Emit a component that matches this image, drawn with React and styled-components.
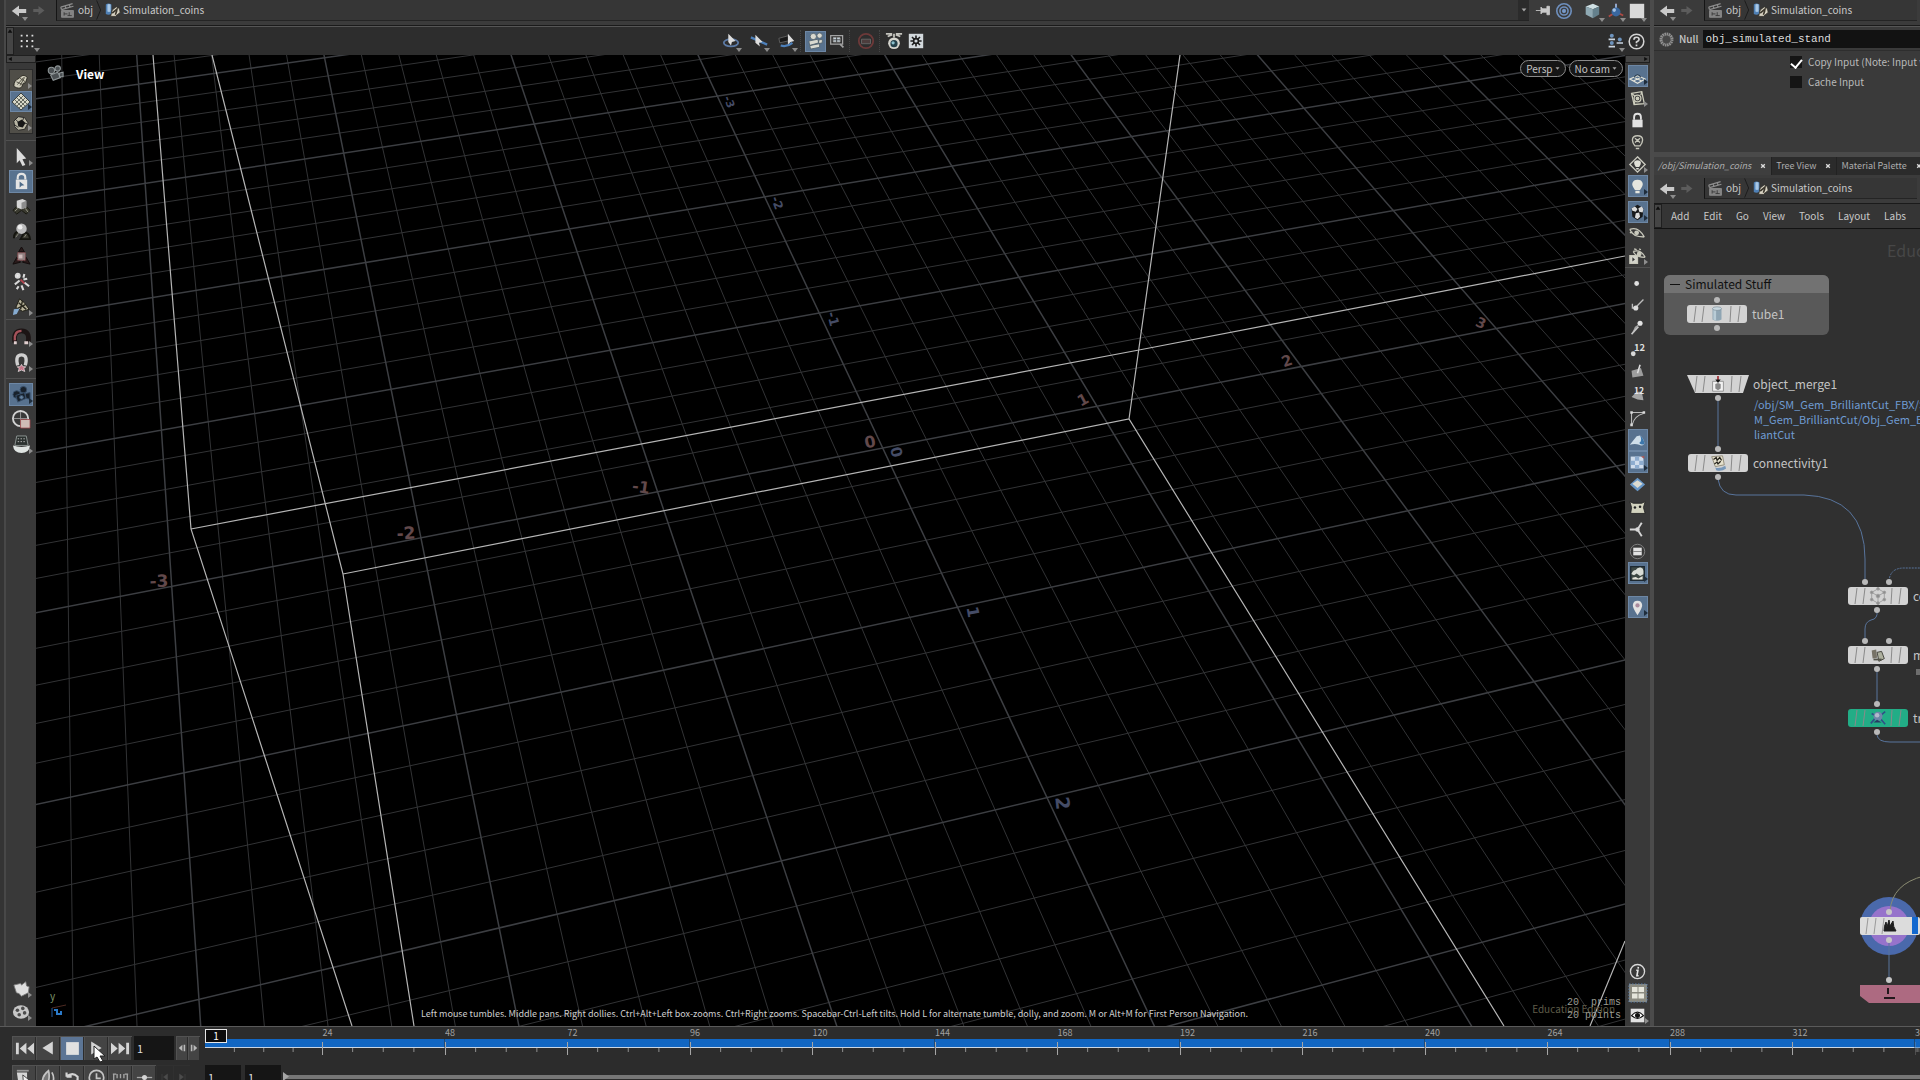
import styled, { createGlobalStyle, css } from "styled-components"

const GlobalStyle = createGlobalStyle`
    *{
        box-sizing: border-box;
        margin: 0;
        padding: 0;
    }
    body{
        background: #2c2c2c;
        color: #c8c8c8;
        font-family: "Noto Sans CJK SC", "Open Sans", sans-serif;
        font-size: 10px;
        line-height: 16px;
        overflow: hidden;
    }
    button, input{
        font: inherit;
        color: inherit;
        border: 0;
        background: none;
    }
    a{
        color: inherit;
        text-decoration: none;
    }
    svg{
        display: block;
        flex-shrink: 0;
    }
`

const Shell = styled.div`
    display: flex;
    flex-direction: column;
    height: 100vh;
    overflow: hidden;
`

const Workspace = styled.div`
    flex: 1;
    min-height: 0;
    display: grid;
    grid-template-columns: 6px minmax(0, 1644fr) 4px minmax(0, 266fr);
`

const Edge = styled.div`
    background: #343434;
    border-right: 2px solid #484848;
`

const Splitter = styled.div`
    background: #4b4b4b;
`

const Pane = styled.section`
    display: flex;
    flex-direction: column;
    min-width: 0;
    min-height: 0;
    background: #3a3a3a;
`

/* path bar */

const PathBar = styled.nav`
    display: flex;
    align-items: center;
    height: ${props => props.$tall ? 29 : 26}px;
    flex-shrink: 0;
    padding: 0 3px ${props => props.$tall ? 1 : 4}px 4px;
    background: #3b3b3b;
    border-bottom: 1px solid #1a1a1a;
`

const Crumbs = styled.div`
    flex: 1;
    display: flex;
    align-items: center;
    gap: 2px;
    height: 21px;
    margin-left: 8px;
    padding-left: 2px;
    background: #363636;
    border-left: 1px solid #151515;
    border-bottom: 1px solid #242424;
    overflow: hidden;
    white-space: nowrap;
`

const DropButton = styled.button`
    margin-left: auto;
    width: 11px;
    height: 21px;
    background: #2b2b2b;
    display: grid;
    place-items: center;
`

const PathTools = styled.div`
    display: flex;
    gap: 1px;
    padding-left: 6px;
`

const IconButton = styled.button`
    position: relative;
    display: grid;
    place-items: center;
    width: ${props => props.$w || 22}px;
    height: ${props => props.$h || 22}px;
    flex-shrink: 0;
    ${props => props.$on && css`
        background: #58728f;
        box-shadow: inset 0 0 0 1px #6d87a5;
    `}
    ${props => props.$more && css`
        &::after{
            content: "";
            position: absolute;
            right: 0;
            bottom: 2px;
            border: 3px solid transparent;
            border-left: 4px solid ${props.$on ? "#1f2d3c" : "#8d8d8d"};
            border-right: 0;
        }
    `}
    ${props => props.$drop && css`
        &::after{
            content: "";
            position: absolute;
            right: 0;
            bottom: 0;
            border: 3px solid transparent;
            border-top: 4px solid #8d8d8d;
            border-bottom: 0;
        }
    `}
`

/* viewer */

const ViewTools = styled.div`
    display: flex;
    align-items: center;
    height: 29px;
    flex-shrink: 0;
    background: #2d2d2d;
    border-top: 1px solid #555;
    padding-right: 3px;
`

const Handle = styled.div`
    width: ${props => props.$wide ? "auto" : "8px"};
    height: ${props => props.$wide ? "8px" : "100%"};
    background: #454545;
    border: 1px solid #1f1f1f;
    display: flex;
    flex-shrink: 0;
    justify-content: ${props => props.$end ? "flex-end" : "flex-start"};
`

const Centered = styled.div`
    flex: 1;
    display: flex;
    align-items: center;
    justify-content: center;
    gap: 3px;
`

const Group = styled.div`
    display: flex;
    align-items: center;
    gap: ${props => props.$gap || 0}px;
    padding: 0 ${props => props.$pad || 0}px;
    border-right: ${props => props.$line ? "1px dotted #454545" : 0};
`

const ViewBody = styled.div`
    flex: 1;
    min-height: 0;
    display: grid;
    grid-template-columns: 30px minmax(0, 1fr) 25px;
`

const Strip = styled.aside`
    background: #393939;
    display: flex;
    flex-direction: column;
    min-height: 0;
`

const StripGroup = styled.div`
    display: flex;
    flex-direction: column;
    align-items: center;
    gap: ${props => props.$gap || 0}px;
    padding-top: ${props => props.$top || 0}px;
    padding-bottom: ${props => props.$pad || 0}px;
    margin-top: ${props => props.$end ? "auto" : 0};
    border-top: ${props => props.$line ? "1px solid #505050" : 0};
`

const Framed = styled.div`
    background: #504e48;
    border: 1px solid #2a2a2a;
    display: flex;
    flex-direction: column;
`

const Viewport = styled.main`
    display: grid;
    background: #000;
    overflow: hidden;
    > *{
        grid-area: 1 / 1;
        min-width: 0;
        min-height: 0;
    }
`

const Scene = styled.svg`
    width: 100%;
    height: 100%;
`

const Overlay = styled.div`
    display: flex;
    flex-direction: column;
    justify-content: space-between;
    z-index: 1;
`

const OverlayTop = styled.div`
    display: flex;
    align-items: flex-start;
    padding: 5px 2px 0 10px;
    gap: 3px;
    > svg{
        margin-top: 5px;
    }
    h1{
        flex: 1;
        padding: 5px 0 0 9px;
        font-size: 12px;
        line-height: 18px;
        font-weight: 700;
        color: #fff;
    }
`

const Pill = styled.button`
    height: 17px;
    padding: 0 5px;
    border: 1px solid #8a8a8a;
    border-radius: 9px;
    background: #161616;
    color: #c4c4c4;
    line-height: 14px;
    display: flex;
    align-items: center;
    gap: 2px;
`

const OverlayBottom = styled.div`
    display: grid;
    grid-template-columns: 160px 1fr 160px;
    align-items: end;
    padding: 0 4px 4px 12px;
    text-align: center;
    color: #cfcfcf;
    p{
        font-size: 9px;
        white-space: nowrap;
    }
`

const Stats = styled.div`
    display: grid;
    justify-items: end;
    > *{
        grid-area: 1 / 1;
    }
    pre{
        font-family: "Liberation Mono", monospace;
        font-size: 10px;
        line-height: 13px;
        color: #9b9b92;
        text-align: right;
    }
    span{
        color: #5f5c48;
        line-height: 26px;
        padding-right: 6px;
    }
`

/* parameters */

const ParamHead = styled.div`
    display: flex;
    align-items: center;
    gap: 4px;
    height: 25px;
    padding: 1px 0 0 4px;
    border-top: 1px solid #555;
    border-bottom: 1px solid #2e2e2e;
    label{
        font-weight: 500;
    }
    input{
        flex: 1;
        min-width: 0;
        height: 18px;
        padding-left: 3px;
        background: #121212;
        color: #dcdcdc;
        font-family: "Liberation Mono", monospace;
        font-size: 11px;
    }
`

const Params = styled.div`
    height: 101px;
    flex-shrink: 0;
    padding: 1px 0 0 136px;
    overflow: hidden;
`

const Check = styled.label`
    display: flex;
    align-items: center;
    gap: 6px;
    height: 20px;
    white-space: nowrap;
    color: #b9b9b9;
    input{
        appearance: none;
        width: 12px;
        height: 12px;
        flex-shrink: 0;
        background: #151515;
        display: grid;
        place-items: center;
    }
    input:checked::after{
        content: "";
        width: 5px;
        height: 9px;
        border: solid #fff;
        border-width: 0 2px 2px 0;
        transform: rotate(40deg);
    }
`

const Tabs = styled.div`
    display: flex;
    height: 23px;
    border-top: 5px solid #4a4a4a;
    background: #222;
    overflow: hidden;
    white-space: nowrap;
    flex-shrink: 0;
`

const Tab = styled.a`
    display: flex;
    align-items: center;
    gap: 9px;
    padding: 0 5px 0 4px;
    margin-right: 1px;
    background: ${props => props.$on ? "#3e3e3e" : "#2b2b2b"};
    color: #adadad;
    font-size: 9px;
    font-style: ${props => props.$on ? "italic" : "normal"};
`

const Menu = styled.menu`
    display: flex;
    align-items: center;
    height: 25px;
    flex-shrink: 0;
    gap: 14px;
    background: #353535;
    border-bottom: 1px solid #121212;
    overflow: hidden;
    button{
        line-height: 16px;
        &:first-of-type{
            margin-left: -5px;
        }
    }
`

const Network = styled.div`
    position: relative;
    flex: 1;
    background: #303030;
    overflow: hidden;
    font-size: 12px;
    line-height: 16px;
    color: #c4c4c4;
`

const Placed = styled.div.attrs(props => ({ style: { left: props.$x, top: props.$y } }))`
    position: absolute;
    display: flex;
    align-items: center;
    gap: 4px;
    white-space: nowrap;
`

const NetBox = styled(Placed)`
    width: 165px;
    height: 60px;
    display: block;
    border-radius: 6px;
    background: #595959;
    overflow: hidden;
    h2{
        display: flex;
        align-items: center;
        gap: 5px;
        height: 18px;
        padding-left: 6px;
        background: #727272;
        color: #101010;
        font-size: 12px;
        font-weight: 400;
    }
    i{
        width: 10px;
        height: 1px;
        background: #101010;
    }
`

const Watermark = styled(Placed)`
    font-size: 16px;
    line-height: 20px;
    color: #474747;
`

const Note = styled.p`
    width: 190px;
    font-size: 11px;
    line-height: 15px;
    color: #6f9bd2;
    white-space: pre;
`

const Wires = styled.svg`
    position: absolute;
    inset: 0;
`

/* playbar */

const Playbar = styled.footer`
    height: 54px;
    flex-shrink: 0;
    display: grid;
    grid-template-columns: 191px minmax(0, 1fr);
    grid-template-rows: 38px 24px;
    padding-left: 9px;
    background: #2c2c2c;
    border-top: 1px solid #5a5a5a;
    overflow: hidden;
`

const Buttons = styled.div`
    display: flex;
    align-items: center;
    align-self: start;
    padding: ${props => props.$top || 0}px 0 0 3px;
`

const PlayButton = styled.button`
    position: relative;
    width: ${props => props.$small ? 12 : props.$flat ? 17 : 24}px;
    height: 24px;
    display: grid;
    place-items: center;
    flex-shrink: 0;
    background: ${props => props.$on ? "#5c7595" : props.$flat ? "#2c2c2c" : "#444"};
    box-shadow: inset 1px 1px 0 ${props => props.$flat ? "#303030" : "#525252"}, inset -1px 0 0 #2c2c2c;
`

const FrameInput = styled.input`
    width: ${props => props.$w || 36}px;
    height: 24px;
    padding: 0 3px;
    margin: 0 2px;
    background: #151515;
    color: #dedede;
    font-size: 11px;
`

const Cursor = styled.svg`
    position: absolute;
    left: 9px;
    top: 9px;
    z-index: 2;
`

const Ruler = styled.div`
    position: relative;
    display: grid;
    grid-template-columns: repeat(14, 24fr) 1fr;
`

const Span24 = styled.div`
    color: #a0a0a0;
    font-size: 9px;
    line-height: 12px;
    min-width: 0;
    overflow: hidden;
    margin-left: ${props => props.$first ? 5 : 0}px;
    svg{
        width: 100%;
    }
`

const Playhead = styled.output`
    position: absolute;
    left: 5px;
    top: 2px;
    width: 22px;
    height: 14px;
    background: #0c0c0c;
    border: 1px solid #e6e6e6;
    color: #fff;
    line-height: 12px;
    text-align: center;
`

const RangeRow = styled.div`
    display: flex;
    align-items: center;
    padding-left: 3px;
    input[type=range]{
        appearance: none;
        flex: 1;
        min-width: 0;
        height: 4px;
        margin-bottom: 1px;
        background: #777;
        &::-webkit-slider-thumb{
            appearance: none;
            width: 6px;
            height: 9px;
            background: #a5a5a5;
            clip-path: polygon(0 0, 100% 50%, 0 100%);
        }
    }
`

/* every drawing sits on a 20 x 20 board */
const glyphs = {
    back: <path d="M1 10l9-7v4.500h9v5h-9v4.500z" fill="#c9c9c9" />,
    forward: <path d="M18 10l-8-6v4H3v4h7v4z" fill="#5c5c5c" />,
    clap: <g fill="none" stroke="#8d8d8d"><path d="M2 6l14-4M3 9l14-4M2 6l1 3M7 4l1 3M12 3l1 3" strokeWidth="1.500" /><path d="M3 10h14v8H3z" fill="#848484" /><path d="M6 12v4M6 14h4M12 12v4M10 16h5" stroke="#333" /></g>,
    coins: <g><path d="M1 3q3-2 7 0v12q-4 2-7 0z" fill="#4f80b5" /><path d="M3 3q2-1 4 0v9q-2 1-4 0z" fill="#a9c8e6" /><path d="M7 18l2-8 5-4 4 2 1 5-6 5z" fill="#d9d4c4" stroke="#2b2925" /><path d="M9 14l7-6M13 16l2-6" stroke="#3a352c" strokeWidth="2" /></g>,
    pin: <path d="M1 10h6V6l2 2h5V5h3v10h-3v-3H9l-2 2v-4" fill="#c9c9c9" stroke="#c9c9c9" />,
    target: <g fill="none" stroke="#6e8fbd" strokeWidth="1.800"><circle cx="10" cy="10" r="8" /><circle cx="10" cy="10" r="4.500" /><circle cx="10" cy="10" r="1.500" fill="#a9c5ea" /></g>,
    cube: <g><path d="M3 5l8-3 7 3-7 3z" fill="#cfe0e4" /><path d="M3 5l8 3v10l-8-4z" fill="#8fa9b3" /><path d="M11 8l7-3v9l-7 4z" fill="#64808c" /></g>,
    tube: <g><path d="M5 4v12q5 3 10 0V4z" fill="#8fa5b3" /><path d="M6 5v11q2 1 3 1V5z" fill="#b9ccd6" /><ellipse cx="10" cy="4" rx="5" ry="2" fill="#c9d8df" stroke="#6d7f8a" strokeWidth=".6" /></g>,
    merge: <g><path d="M4 7h12v11H4z" fill="#f2f2f2" stroke="#8d8d8d" /><path d="M7 10l3-1 3 1v5l-3 2-3-2z" fill="#888" /><path d="M10 1v5" stroke="#a5383d" strokeWidth="2" /><path d="M7 5h6l-3 4z" fill="#161616" /></g>,
    connect: <g><path d="M3 3l12-1 2 10-10 2z" fill="#e5e0cc" stroke="#8d8875" /><path d="M5 6l3-2 1 3 3-3 2 3M6 11l3-2 1 2 3-3" stroke="#26241d" fill="none" strokeWidth="1.400" /><path d="M7 15q5 2 11-2l1 3q-5 4-11 2z" fill="#7797b9" /></g>,
    mesh: <g fill="#8d8d8d" stroke="#9d9d9d"><path d="M10 2l7 4v8l-7 4-7-4V6zM3 6l7 4 7-4M10 10v8" fill="none" /><circle cx="10" cy="2" r="1.500" /><circle cx="3" cy="6" r="1.500" /><circle cx="17" cy="6" r="1.500" /><circle cx="3" cy="14" r="1.500" /><circle cx="17" cy="14" r="1.500" /><circle cx="10" cy="18" r="1.500" /><circle cx="10" cy="10" r="2" /></g>,
    match: <g><path d="M3 5l5-1 1 9-5 1z" fill="#777266" /><path d="M9 7l5-1 3 8-6 3z" fill="#aeb09e" stroke="#3c3b33" /><path d="M5 15h9" stroke="#55534a" strokeWidth="2" /></g>,
    axis: <g><path d="M10 2v9M10 11l8 4M10 11l-8 5" stroke="#ad4a44" strokeWidth="2" /><path d="M10 11v-9" stroke="#8fb3dd" strokeWidth="2" /><circle cx="10" cy="11" r="5" fill="#39679f" /><circle cx="8" cy="9" r="2" fill="#a5c2e3" /></g>,
    xform: <g><path d="M2 16l6-7M18 17l-6-7M3 5l5 3M18 3l-5 4" stroke="#2f4f87" strokeWidth="1.800" /><circle cx="10" cy="8" r="5" fill="#6e86a8" /><circle cx="9" cy="7" r="2.500" fill="#b3b9cc" /><path d="M5 15l4-3 5 3z" fill="#273a63" /></g>,
    square: <path d="M2 2h16v16H2z" fill="#dadada" />,
    dots: <path d="M3 3h2v2H3zM9 3h2v2H9zM15 3h2v2h-2zM3 9h2v2H3zM9 9h2v2H9zM15 9h2v2h-2zM3 15h2v2H3zM9 15h2v2H9zM15 15h2v2h-2z" fill="#dedede" />,
    tumble: <g><ellipse cx="10" cy="12" rx="8" ry="4" fill="none" stroke="#5d7ba6" strokeWidth="2" /><path d="M7 2l8 8-4 1-1 4-3-4z" fill="#ddd" /></g>,
    pan: <g><path d="M1 6l18 8" stroke="#4d80bb" strokeWidth="2.500" /><path d="M6 3l8 8-4 1 1 4-5-4z" fill="#ddd" /></g>,
    dolly: <g><path d="M1 7l11-3 3 5-13 3z" fill="#171717" stroke="#8a8a8a" strokeWidth=".6" /><path d="M3 15q7 2 13-3" fill="none" stroke="#4d80bb" strokeWidth="2.500" /><path d="M11 2l7 8-4 1-3 3z" fill="#ddd" /></g>,
    movie: <g fill="#d9d9d0" stroke="#55646f"><circle cx="7" cy="5" r="3.500" /><circle cx="14" cy="4" r="3" /><path d="M2 10l10-2 1 4-10 3zM13 9l4-1v4l-4 1zM3 15l11-2v4L4 19z" /></g>,
    camera: <g fill="#4b5053" stroke="#8f9698" strokeWidth="1.200"><circle cx="6" cy="6" r="3.500" /><circle cx="13" cy="4" r="3" /><path d="M5 11l8-3 3 6-8 3zM15 9l4-1v5h-4z" /></g>,
    camblue: <g fill="#18212b" stroke="#39506a"><circle cx="5" cy="10" r="4" /><circle cx="12" cy="5" r="3.500" /><path d="M4 11l9-3 2 6-9 4zM14 9l5-1v7l-5-1z" /><circle cx="10" cy="13" r="2" fill="#65829e" /></g>,
    snap: <g fill="none" stroke="#a3a3a3"><path d="M2 3h14v10H2z" strokeWidth="1.500" /><path d="M5 5.500h8v5H5z" fill="#c9d7e0" /><path d="M9 5v6M5 8h8" stroke="#333" /><path d="M13 13l4 4" strokeWidth="2" /></g>,
    stop: <g fill="none" stroke="#6d3939"><circle cx="10" cy="10" r="8" strokeWidth="2" /><path d="M5 8h10v5H5z" stroke="#666" fill="#4c3d3d" /></g>,
    orbcam: <g><path d="M1 2h7M12 2h7M3 5l5-2M17 5l-5-2M10 2v4" stroke="#c3c3bd" strokeWidth="2" /><circle cx="10" cy="12.500" r="6.500" fill="#d4d4cd" /><circle cx="10" cy="13" r="4" fill="#24414b" /><circle cx="9" cy="12" r="1.800" fill="#8ac0cc" /></g>,
    gear: <g><path d="M1 1h18v18H1z" fill="#d2d8dc" /><g stroke="#1d1d1d" strokeWidth="2"><path d="M10 3v14M3 10h14M5 5l10 10M15 5L5 15" /></g><circle cx="10" cy="10" r="3" fill="#d2d8dc" stroke="#1d1d1d" strokeWidth="2" /></g>,
    people: <g fill="#6d93bd"><circle cx="6" cy="3.500" r="2.500" /><circle cx="6" cy="12.500" r="2.500" /><circle cx="16" cy="8" r="2.500" /><path d="M2 7h8v2H2zM2 16h8v2H2zM12 11.500h8v2h-8z" fill="#c9d4df" /></g>,
    help: <g fill="none" stroke="#d4d4d4" strokeWidth="1.800"><circle cx="10" cy="10" r="8.600" /><path d="M7 8q0-3 3-3t3 2.500q0 1.500-3 3v1.500M10 13.500v2" strokeWidth="2" /></g>,
    patch: <g><path d="M2 16q0-7 6-9 4-6 9-1l-2 6q-3-1-4 4-2 4-9 0z" fill="#cfccbb" stroke="#26241d" /><path d="M6 14l7-8M9 15l5-9M5 11l7 3M9 7l6 4" stroke="#4a473c" /></g>,
    diamond: <g><path d="M10 1l9 9-9 8-9-8z" fill="#d8d8c8" stroke="#3a3f3d" /><path d="M6 6l8 8M4 8l8 8M8 4l8 8M14 6l-8 8M12 4l-8 8M16 8l-8 8" stroke="#65695f" /></g>,
    blob: <g><path d="M2 8l5-5 7 1 4 6-4 7-7 1-4-4z" fill="#b9b6a4" stroke="#222" /><path d="M6 9l5-3 4 4-3 5-5-1z" fill="#171717" /><path d="M3 12l4 3M4 6l3 3M13 4l-1 3M17 11l-3-1" stroke="#222" /></g>,
    arrow: <path d="M5 1l10 11-4 1 3 6-3 1-3-6-3 3z" fill="#dcdcdc" />,
    lock: <g><path d="M4 9h12v9H4z" fill="#e2e2e2" /><path d="M6 9V6q0-4 4-4t4 4v3" fill="none" stroke="#e2e2e2" strokeWidth="2.200" /></g>,
    lockarrow: <g><path d="M4 8h12v10H4z" fill="#e4e4e4" /><path d="M6 8V6q0-4 4-4t4 4v2" fill="none" stroke="#e4e4e4" strokeWidth="2.200" /><path d="M8 10l5 4-3 .5-2 2z" fill="#4d6a88" /></g>,
    move: <g><path d="M1 14l5-5h8l5 5-4 4-5-4-5 4z" fill="#39392f" stroke="#17170f" /><path d="M5 4l6-2 4 2v7l-5 2-5-2z" fill="#d5d5d5" /><path d="M10 6v7l5-2V4z" fill="#8d8d8d" /><path d="M3 15l3-3M14 12l3 4" stroke="#9b9b8a" /></g>,
    rotate: <g><path d="M2 17q0-7 6-7M9 18l4-7q5 0 6 7z" fill="#3b3b31" stroke="#15150f" strokeWidth="2" /><path d="M4 16l3-4M13 16l2-3" stroke="#8d8d80" /><circle cx="10" cy="7" r="5.500" fill="#bcbcbc" /><circle cx="8.500" cy="5.500" r="2.500" fill="#eee" /></g>,
    scale: <g><path d="M10 0l3 5H7zM1 18l4-7 4 5zM19 18l-4-7-4 5z" fill="#2a1b1b" stroke="#120c0c" /><path d="M6 6h8v8H6z" fill="#8f8080" stroke="#a04b50" strokeDasharray="1 1" /><path d="M7 8h4v4H7z" fill="#ccb8b8" /></g>,
    puppet: <g fill="none" stroke="#d9d9d9" strokeWidth="2.200"><circle cx="6" cy="4" r="2" fill="#eee" /><path d="M12 6l1-4M8 9l-5 4M13 11l5 4M10 14l2 5M7 15l-2 3M12 8l4-1" /><path d="M9 8l4 4" stroke="#b1444f" strokeWidth="2" /></g>,
    handles: <g><path d="M8 2l5 4 5 7-7 2-7-4z" fill="#b9b49c" stroke="#1f1d14" /><path d="M7 6l8 7M11 4l-2 9M14 8l-8 4" stroke="#2a281d" strokeWidth="1.500" /><path d="M2 13l6-1-3 6-4 1z" fill="#86abd0" /></g>,
    magred: <g fill="none"><path d="M3 15q-2-12 7-12t7 12" stroke="#1c1414" strokeWidth="5" /><path d="M3 13q-1-10 7-10" stroke="#a4525a" strokeWidth="2.500" /><path d="M2 14h3v3H2zM13 14h4v3h-4z" fill="#e1cfcf" /></g>,
    magnet: <g fill="none"><path d="M6 13q-3-11 4-11t4 11" stroke="#cfcfcf" strokeWidth="3.500" /><path d="M10 12l1.500 2.500h3l-2 2 1 3-3.500-1.500-3.500 1.500 1-3-2-2h3z" fill="#c67689" stroke="#eee" strokeWidth=".7" /></g>,
    render: <g><circle cx="9" cy="9" r="8" fill="none" stroke="#d3d3d3" strokeWidth="2" /><path d="M9 2v14M2 9h14" stroke="#9a9a9a" /><path d="M9 10h10v9H9z" fill="#d0bcb6" stroke="#973f44" strokeWidth=".8" /></g>,
    flip: <g><path d="M5 1h10l2 10H3z" fill="#2b312f" stroke="#8d9693" /><path d="M6 4h8M6 7h8" stroke="#bcbcbc" strokeDasharray="1.500" /><path d="M1 11q9 3 18 0-1 8-9 8t-9-8z" fill="#dfe4e2" /></g>,
    note: <path d="M1 6l8-2 1 2 5-4 1 5 3 1-1 7-8 4-3-3-3-1z" fill="#dedede" stroke="#777" />,
    reel: <g><ellipse cx="10" cy="10" rx="9" ry="7.500" fill="#c7c7c7" /><g fill="#4c4c4c"><circle cx="6" cy="8" r="2" /><circle cx="12" cy="6" r="2" /><circle cx="14" cy="11" r="2" /><circle cx="8" cy="13" r="2" /></g></g>,
    plane: <g fill="none" stroke="#e4e4da" strokeWidth="1.300"><path d="M1 13l9-4 9 4-9 5zM5.500 11l9 4M14.500 11l-9 4" /><path d="M6 11q4-6 8 0" stroke="#26394c" /></g>,
    ghost: <g fill="none" stroke="#cdcdbc" strokeWidth="1.500"><path d="M3 4l12-2 3 14-12 1z" /><circle cx="10" cy="10" r="4" /><circle cx="10" cy="10" r="1.500" fill="#cdcdbc" /><path d="M3 4l4 3M15 2l-1 4M6 17l1-4" /></g>,
    nolight: <g fill="none" stroke="#c4c4b8" strokeWidth="1.600"><path d="M7 14q-3-4-3-7 0-5 6-5t6 5q0 3-3 7zM8 17h4M7 5l6 5M13 5l-6 5" /></g>,
    headlight: <g><path d="M10 1l9 9-9 9-9-9z" fill="none" stroke="#cbcbc0" strokeWidth="1.600" /><path d="M8 13q-2-3-2-5 0-3 4-3t4 3q0 2-2 5zM8.500 14h3v2h-3z" fill="#e1e1d8" /></g>,
    bulb: <path d="M7 14Q3 9 4 6q1-4 6-4t6 4q1 3-3 8zM7.500 15h5v3h-5z" fill="#e6e6de" />,
    checker: <g><path d="M3 5l7-4 7 4-1 10-6 4-6-4z" fill="#17191b" /><path d="M3 5l4-2 3 3-2 3-4-1zM11 5l4-2 2 3-1 4-4-1zM8 11l4-1 1 5-3 3-3-2z" fill="#dadada" /></g>,
    eye1: <g fill="none" stroke="#cacabd" strokeWidth="1.600"><path d="M1 4q10-4 17 9M1 4q3 9 17 9M1 8l3-1" /><circle cx="9" cy="8" r="2" fill="#cacabd" /></g>,
    eye2: <g fill="none" stroke="#c8c8bb" strokeWidth="1.500"><path d="M5 4q9-3 14 7M5 4q3 7 14 7M6 1l3 1M12 1l2 1" /><circle cx="12" cy="7" r="2" fill="#c8c8bb" /><path d="M1 9h9v9H1z" fill="#d4d4cb" /><path d="M4 11l3 2.500-3 2.500z" fill="#333" stroke="none" /></g>,
    point: <circle cx="9" cy="10" r="2.800" fill="#e2e2e2" />,
    pnormal: <g><path d="M8 12l9-9M4 8v5h4" stroke="#bcbcbc" strokeWidth="1.600" fill="none" /><circle cx="8" cy="13" r="3" fill="#dcdcdc" /></g>,
    ptrail: <g><path d="M3 18l4-9 5-3z" fill="#a5a5a5" /><circle cx="13" cy="5" r="3" fill="#e2e2e2" /><path d="M3 18l8-9" stroke="#c5c5c5" strokeWidth="2" /></g>,
    pnum: <g><circle cx="5" cy="15" r="2.800" fill="#d9d9d9" /><text x="6" y="12" fontSize="11" fontWeight="700" fill="#dedede">12</text></g>,
    prim: <g><path d="M3 9l11-3 3 9-13 2z" fill="#9d9d9d" /><path d="M10 12l3-10" stroke="#dedede" strokeWidth="1.800" /></g>,
    primnum: <g><path d="M3 14l6-6h6l2 10-7-1z" fill="#a5a5a5" /><text x="6" y="11" fontSize="10" fontWeight="700" fill="#e6e6e6">12</text></g>,
    hull: <g fill="none" stroke="#bcbcbc" strokeWidth="1.200"><path d="M3 18V3h15" /><path d="M4 17Q6 7 17 4" /><path d="M1.500 1.500h3v3h-3zM1.500 16h3v3h-3zM16 1.500h3v3h-3z" fill="#dadada" stroke="none" /></g>,
    shade: <g><path d="M1 15l8-10 4-1q5 4 5 10-3 3-6 1-5-2-11 0z" fill="#cfdee9" /><path d="M12 13q4-3 1-9 5 4 5 10-3 2-6-1z" fill="#3d77ab" /></g>,
    uv: <g><path d="M2 3h15v14H2z" fill="#cfdcec" /><path d="M2 8h5v5H2zM7 3h5v5H7zM12 8h5v5h-5zM7 13h5v4H7z" fill="#8daccf" /><path d="M14 3l4-1v4" fill="#a35a58" /></g>,
    gem: <g><path d="M10 2l9 8-9 8-9-8z" fill="#6897c7" /><path d="M10 5l6 4-6 5-6-5z" fill="#dcdcd2" /></g>,
    cow: <g><path d="M1 3l4 2h10l4-2-2 7 2 7H2l1-7z" fill="#d3d3bf" stroke="#222" /><circle cx="7" cy="10" r="1.500" fill="#222" /><circle cx="13" cy="9" r="1.500" fill="#222" /></g>,
    tripod: <g stroke="#d6d6d6" strokeWidth="2.200"><path d="M1 10h9M10 10l5-8M10 10l5 8" /><circle cx="10" cy="10" r="1.500" fill="#eee" /></g>,
    list: <g><circle cx="10" cy="10" r="8.500" fill="none" stroke="#8a8a8a" /><path d="M5 5.500h10v9H5z" fill="#e2e2e2" /><path d="M5 10h10" stroke="#777" /></g>,
    image: <g><path d="M2 2h16v16H2z" fill="#3d4743" stroke="#1d2830" strokeWidth="1.500" /><path d="M3 10q2-4 5-4 2-4 6-3 3 1 3 4v4l-4 2-4-3-3 2-3-1z" fill="#d8dcd6" /><path d="M4 15l4-1 3 2 5-3v4H4z" fill="#e3e3da" /></g>,
    marker: <g><path d="M10 19Q4 10 4.500 7q.5-5 5.500-5t5.500 5q.5 3-5.500 12z" fill="#e1e1e1" /><circle cx="10" cy="7.500" r="2.500" fill="#a98a9c" /></g>,
    info: <g><circle cx="10" cy="10" r="8.300" fill="none" stroke="#d8d8d8" strokeWidth="1.600" /><path d="M11 4.500l-.3 2M8.500 8.500h2l-1.200 6.500h2" fill="none" stroke="#e6e6e6" strokeWidth="1.900" /></g>,
    layout4: <g><path d="M1 1h18v18H1z" fill="#8a8a80" stroke="#5c7ea8" strokeDasharray="1.500" /><path d="M4 4h5.500v5H4zM10.500 4H16v5h-5.500zM4 10.500h5.500v5H4zM10.500 10.500H16v5h-5.500z" fill="#e6e6dc" /></g>,
    eyebox: <g><path d="M2 2h16v16H2z" fill="#e2e2e2" /><path d="M3 10q7-8 14 0-7 7-14 0z" fill="#fff" stroke="#111" strokeWidth="1.300" /><circle cx="10" cy="10" r="3" fill="#111" /></g>,
    ring: <g><circle cx="10" cy="10" r="6.500" fill="#474747" stroke="#909090" strokeWidth="3.500" strokeDasharray="1.800 .7" /></g>,
    first: <path d="M1 4h3v12H1zM12 4v12l-7-6zM20 4v12l-7-6z" fill="#d5d5d5" />,
    reverse: <path d="M16 2v16L3 10z" fill="#d5d5d5" />,
    halt: <path d="M2.500 2.500h15v15h-15z" fill="#e1e1e1" />,
    play: <path d="M4 2v16l13-8z" fill="#d5d5d5" />,
    last: <path d="M16 4h3v12h-3zM0 4v12l7-6zM8 4v12l7-6z" fill="#d5d5d5" />,
    stepback: <path d="M11 2v16L2 10zM14 2h4v16h-4z" fill="#b9b9b9" />,
    stepfwd: <path d="M2 2h4v16H2zM9 2v16l9-8z" fill="#b9b9b9" />,
    page: <g><path d="M1 4h12v14H3z" fill="#d7d7d7" /><path d="M1 2h14" stroke="#999" strokeWidth="2" /><path d="M8 7l10 8-5 1-4 4z" fill="#f1f1f1" stroke="#333" /></g>,
    sound: <g fill="none" stroke="#c4c4c4" strokeWidth="2"><path d="M3 17Q2 8 10 2q2 7-1 16" fill="#777" /><path d="M14 4q4 7 0 14" /></g>,
    loop: <path d="M3 9h6M3 9V4M3 9q7-6 13 0v4q-6 5-12 1" fill="none" stroke="#d4d4d4" strokeWidth="2.500" />,
    clock: <g fill="none" stroke="#c4c4c4" strokeWidth="2"><circle cx="10" cy="10" r="8.500" /><path d="M10 5v6h5" /></g>,
    comb: <path d="M2 6v10M6 6v5M10 6v5M14 6v5M18 6v10M1 6h4M15 6h4" stroke="#a5a5a5" strokeWidth="1.600" fill="none" />,
    key: <g><path d="M1 10h18" stroke="#a5a5a5" strokeWidth="1.500" /><circle cx="10" cy="10" r="3" fill="#d4d4d4" /></g>,
    keyprev: <path d="M4 4v12M15 4v12l-8-6z" fill="#4b4b4b" stroke="#4b4b4b" />,
    keynext: <path d="M16 4v12M5 4v12l8-6z" fill="#4b4b4b" stroke="#4b4b4b" />,
    down: <path d="M2 5h16l-8 10z" fill="#a5a5a5" />,
    up: <path d="M2 16h16L10 4z" fill="#0d0d0d" />,
    left: <path d="M16 3v14L4 10z" fill="#0d0d0d" />,
    right: <path d="M4 3v14l12-7z" fill="#0d0d0d" />,
    close: <path d="M4 4l12 12M16 4L4 16" stroke="#dcdcdc" strokeWidth="4.500" />,
    chevron: <path d="M4-14l10 24L4 34" fill="none" stroke="#1c1c1c" strokeWidth="2.500" />,
}

const Icon = ({ name, size = 16 }) => (
    <svg viewBox="0 0 20 20" width={size} height={size} overflow="visible" aria-hidden="true">{glyphs[name]}</svg>
)

const Tool = ({ name, size, ...rest }) => (
    <IconButton aria-label={name} {...rest}><Icon name={name} size={size} /></IconButton>
)

function Path({ children, tall }) {
    return (
        <PathBar $tall={tall}>
            <Tool name="back" size={16} $w={18} $h={20} $drop />
            <Tool name="forward" size={15} $w={20} $h={20} />
            <Crumbs>
                <Icon name="clap" size={17} />
                <a href="#obj">obj</a>
                <Icon name="chevron" size={8} />
                <Icon name="coins" size={16} />
                <a href="#coins">Simulation_coins</a>
                {children && <DropButton aria-label="history"><Icon name="down" size={6} /></DropButton>}
            </Crumbs>
            {children && <PathTools>{children}</PathTools>}
        </PathBar>
    )
}

/* ground plane projection: world x, z -> screen */
function project(x, z) {
    const w = 1 + 0.0245 * x - 0.082 * z
    return [
        (241.2 * x - 3.7 * z + 882.7) / w,
        (-31.75 * x + 109.4 * z + 448) / w,
    ]
}

function gridPath(major) {
    const parts = []
    for (let i = -30; i <= 30; i++) {
        if ((i % 5 === 0) !== major) continue
        const k = i / 5
        const [ax, ay] = project(k, -6)
        const [bx, by] = project(k, 5)
        const [cx, cy] = project(-6, k)
        const [dx, dy] = project(6, k)
        parts.push(`M${ax} ${ay}L${bx} ${by}`)
        if (k <= 5) parts.push(`M${cx} ${cy}L${dx} ${dy}`)
    }
    return parts.join("")
}

const xLabels = [
    ["-3", 159, 581, -2, 17], ["-2", 406, 533, -4, 17], ["-1", 641, 487, 8, 16], ["0", 870, 442, -12, 16],
    ["1", 1083, 400, -28, 15], ["2", 1287, 361, -20, 15], ["3", 1481, 323, 24, 14],
]

const zLabels = [
    ["-3", 729, 102, 70, 11], ["-2", 777, 203, 70, 12], ["-1", 833, 319, 76, 13],
    ["0", 896, 452, 76, 15], ["1", 973, 612, 80, 16], ["2", 1063, 803, 84, 19],
]

function GroundLabels({ items, color }) {
    return (
        <g fill={color} fontFamily="DejaVu Sans, sans-serif" fontWeight="700" textAnchor="middle" dominantBaseline="central">
            {items.map(([text, x, y, turn, size]) => (
                <text key={text} fontSize={size} transform={`translate(${x} ${y}) rotate(${turn})`}>{text}</text>
            ))}
        </g>
    )
}

function Viewer() {
    return (
        <Viewport>
            <Scene viewBox="36 55 1589 971" preserveAspectRatio="xMidYMid slice">
                <path d={gridPath(false)} stroke="#323335" fill="none" />
                <path d={gridPath(true)} stroke="#3c3e42" strokeWidth="1.500" fill="none" />
                <path
                    d="M153 55L191 529L352 1026M212 55L343 574L414 1026M191 529L1139 350L1625 256M343 574L1129 419L1504 1026M1129 419L1180 55M1590 1026L1625 941"
                    stroke="#b5b5b5"
                    strokeWidth="1.200"
                    fill="none"
                />
                <GroundLabels items={xLabels} color="#62494b" />
                <GroundLabels items={zLabels} color="#454c66" />
            </Scene>
            <Overlay>
                <OverlayTop>
                    <Icon name="camera" size={18} />
                    <h1>View</h1>
                    <Pill>Persp <Icon name="down" size={5} /></Pill>
                    <Pill>No cam <Icon name="down" size={5} /></Pill>
                </OverlayTop>
                <OverlayBottom>
                    <svg width="30" height="34" viewBox="0 0 30 34">
                        <text x="2" y="12" fontSize="10" fill="#7d9468">y</text>
                        <path d="M4 20l14-3" stroke="#4d2a22" />
                        <path d="M4 20v9" stroke="#225a9d" />
                        <path d="M6 22h3v4h4v-3" fill="none" stroke="#2b7ac9" strokeWidth="2" />
                    </svg>
                    <p>Left mouse tumbles. Middle pans. Right dollies. Ctrl+Alt+Left box-zooms. Ctrl+Right zooms. Spacebar-Ctrl-Left tilts. Hold L for alternate tumble, dolly, and zoom. M or Alt+M for First Person Navigation.</p>
                    <Stats>
                        <span>Education Edition</span>
                        <pre>{"20  prims\n20 points"}</pre>
                    </Stats>
                </OverlayBottom>
            </Overlay>
        </Viewport>
    )
}

const nodes = [
    { name: "tube1", x: 33, y: 76, icon: "tube", ins: [30], outs: [30] },
    { name: "object_merge1", x: 34, y: 146, icon: "merge", ins: [], outs: [30], shape: "funnel" },
    { name: "connectivity1", x: 34, y: 225, icon: "connect", ins: [30], outs: [30] },
    { name: "copytopoints1", x: 194, y: 358, icon: "mesh", ins: [17, 41], outs: [29] },
    { name: "merge1", x: 194, y: 417, icon: "match", ins: [17, 41], outs: [29] },
    { name: "transform1", x: 194, y: 480, icon: "xform", ins: [29], outs: [29], fill: "#22ad86" },
]

function NetNode({ name, x, y, icon, ins, outs, shape, fill = "#d3d3d3" }) {
    return (
        <Placed $x={x - 1} $y={y - 9}>
            <svg width="62" height="36" viewBox="-1 -9 62 36">
                {shape === "funnel"
                    ? <path d="M-1 0h62l-6 18H7z" fill={fill} />
                    : <rect width="60" height="18" rx="3" fill={fill} />}
                <path d="M9 1l-2 16M17 1l-2 16M44 1l-1 16M53 1l-2 16" stroke="#8a8a8a" />
                <svg x="21" y="0" width="18" height="18" viewBox="0 0 20 20">{glyphs[icon]}</svg>
                {ins.map(p => <circle key={p} cx={p} cy="-5" r="3" fill="#b9b9b9" />)}
                {outs.map(p => <circle key={p} cx={p} cy="23" r="3" fill="#b9b9b9" />)}
            </svg>
            {name}
        </Placed>
    )
}

function NetworkView() {
    return (
        <Network>
            <Watermark $x={233} $y={11}>Education Edition</Watermark>
            <NetBox $x={10} $y={46}><h2><i />Simulated Stuff</h2></NetBox>
            <Wires width="100%" height="100%" fill="none" stroke="#58749c">
                <path d="M64 170V220M64 250Q66 266 82 266H150Q211 268 211 330V352" />
                <path d="M223 382Q224 390 217 391Q211 393 211 400V410M223 442V474M223 506Q224 513 236 513H270" />
                <path d="M235 352Q236 339 250 339H270" strokeDasharray="2 1" />
                <circle cx="235" cy="697" r="29" fill="#4a69ab" stroke="none" />
                <circle cx="235" cy="697" r="20" fill="#9673cb" stroke="none" />
                <path d="M236 682Q238 655 270 647" stroke="#8b8c72" />
                <path d="M235 714V750" />
                <rect x="206" y="688" width="60" height="18" rx="2" fill="#dcdcdc" stroke="none" />
                <path d="M214 689l-2 16M222 689l-2 16M230 689l-2 16" stroke="#9a9a9a" />
                <path d="M258 688h6v17h-6z" fill="#1268cf" stroke="none" />
                <path d="M230 702q0-5 2-9l1 5 2-7 1 6 3-5q0 6 3 10z" fill="#1d1d1d" stroke="#1d1d1d" />
                <g fill="#c6c6c6" stroke="none">
                    <circle cx="235" cy="683" r="3" />
                    <circle cx="235" cy="711" r="3" />
                    <circle cx="235" cy="751" r="3" />
                </g>
                <path d="M206 756h60v18h-51l-9-7z" fill="#ad6a81" stroke="none" />
                <path d="M234 759v6M230 769h11" stroke="#22181c" strokeWidth="2" />
                <path d="M262 440h8v6h-8z" fill="#6d6d6d" stroke="none" />
            </Wires>
            {nodes.map(node => <NetNode key={node.name} {...node} />)}
            <Placed $x={100} $y={168}>
                <Note>{"/obj/SM_Gem_BrilliantCut_FBX/S\nM_Gem_BrilliantCut/Obj_Gem_Bril\nliantCut"}</Note>
            </Placed>
        </Network>
    )
}

const frames = Array.from({ length: 15 }, (_, i) => i * 24)

function Timeline() {
    return (
        <Ruler>
            {frames.map(frame => (
                <Span24 key={frame} $first={frame === 0}>
                    {frame || "\u00a0"}
                    <svg height="16" viewBox="0 0 120 16" preserveAspectRatio="none">
                        <path d="M0 0h120v9H0z" fill="#1166c2" />
                        <path d="M0 8.500h120" stroke="#c9d6e4" />
                        <path d="M30 9v4M60 9v4M90 9v4" stroke="#8d8d8d" />
                        {frame > 0 && <path d="M.5 3v13" stroke="#a5a5a5" />}
                    </svg>
                </Span24>
            ))}
            <Playhead>1</Playhead>
        </Ruler>
    )
}

/* name, has a flyout, is active */
const leftTools = [
    [4, [["arrow", 1], ["lockarrow", 0, 1], ["move"], ["rotate"], ["scale"], ["puppet"], ["handles", 1]]],
    [6, [["magred", 1], ["magnet", 1]]],
    [4, [["camblue", 1, 1], ["render"], ["flip", 1]]],
]

const rightTools = [
    [2, [["plane", 1, 1], ["ghost", 1], ["lock"], ["nolight"], ["headlight", 1], ["bulb", 1, 1]]],
    [4, [["checker", 1, 1], ["eye1"], ["eye2", 1]]],
    [4, [["point"], ["pnormal"], ["ptrail"], ["pnum"], ["prim"], ["primnum"]]],
    [3, [["hull"], ["shade", 0, 1], ["uv", 1, 1], ["gem"]]],
    [1, [["cow"], ["tripod"], ["list"], ["image", 1, 1]]],
    [12, [["marker", 1, 1]]],
]

export default function App() {
    return (
        <Shell>
            <GlobalStyle />
            <Workspace>
                <Edge />
                <Pane>
                    <Path>
                        <Tool name="pin" size={17} $w={14} />
                        <Tool name="target" size={18} $w={28} />
                        <Tool name="cube" size={18} $w={26} $drop />
                        <Tool name="axis" size={18} $w={20} $drop />
                        <Tool name="square" size={18} $w={20} $drop />
                    </Path>
                    <ViewTools>
                        <Handle><Icon name="up" size={6} /></Handle>
                        <Tool name="dots" size={18} $w={26} $drop />
                        <Centered>
                            <Group $gap={6} $pad={2} $line>
                                <Tool name="tumble" size={18} $drop />
                                <Tool name="pan" size={18} $drop />
                                <Tool name="dolly" size={18} $drop />
                            </Group>
                            <Group $line $pad={1}>
                                <Tool name="movie" size={18} $w={21} $h={21} $on />
                                <Tool name="snap" size={17} />
                            </Group>
                            <Group $line $pad={2}>
                                <Tool name="stop" size={18} />
                            </Group>
                            <Group>
                                <Tool name="orbcam" size={18} />
                                <Tool name="gear" size={16} />
                            </Group>
                        </Centered>
                        <Tool name="people" size={16} $drop $w={20} />
                        <Tool name="help" size={17} />
                    </ViewTools>
                    <ViewBody>
                        <Strip>
                            <Handle $wide><Icon name="left" size={6} /></Handle>
                            <StripGroup $top={6} $pad={6}>
                                <Framed>
                                    <Tool name="patch" size={18} $w={22} $h={21} $more />
                                    <Tool name="diamond" size={20} $w={22} $h={21} $on $more />
                                    <Tool name="blob" size={18} $w={22} $h={21} $more />
                                </Framed>
                            </StripGroup>
                            {leftTools.map(([top, group], i) => (
                                <StripGroup key={i} $line $top={top} $pad={i === 1 ? 4 : 1} $gap={2}>
                                    {group.map(([name, more, on]) => (
                                        <Tool key={name} name={name} size={19} $w={24} $h={23} $more={more} $on={on} />
                                    ))}
                                </StripGroup>
                            ))}
                            <StripGroup $end $pad={3}>
                                <Tool name="note" size={17} $h={23} $more />
                                <Tool name="reel" size={18} $h={23} $more />
                            </StripGroup>
                        </Strip>
                        <Viewer />
                        <Strip>
                            <Handle $wide $end><Icon name="right" size={6} /></Handle>
                            {rightTools.map(([top, group], i) => (
                                <StripGroup key={i} $top={top} $line={i === 2}>
                                    {group.map(([name, more, on]) => (
                                        <Tool key={name} name={name} size={17} $w={20} $more={more} $on={on} />
                                    ))}
                                </StripGroup>
                            ))}
                            <StripGroup $end>
                                <Tool name="info" size={17} />
                                <Tool name="layout4" size={20} />
                                <Tool name="eyebox" size={17} $more />
                            </StripGroup>
                        </Strip>
                    </ViewBody>
                </Pane>
                <Splitter />
                <Pane>
                    <Path />
                    <ParamHead>
                        <Icon name="ring" size={17} />
                        <label htmlFor="node">Null</label>
                        <input id="node" defaultValue="obj_simulated_stand" />
                    </ParamHead>
                    <Params>
                        <Check><input type="checkbox" defaultChecked />Copy Input (Note: Input will be copied)</Check>
                        <Check><input type="checkbox" />Cache Input</Check>
                    </Params>
                    <Tabs>
                        <Tab href="#network" $on>/obj/Simulation_coins <Icon name="close" size={6} /></Tab>
                        <Tab href="#tree">Tree View <Icon name="close" size={6} /></Tab>
                        <Tab href="#palette">Material Palette <Icon name="close" size={6} /></Tab>
                    </Tabs>
                    <Path tall />
                    <Menu>
                        <Handle><Icon name="up" size={6} /></Handle>
                        {["Add", "Edit", "Go", "View", "Tools", "Layout", "Labs"].map(item => <button key={item}>{item}</button>)}
                    </Menu>
                    <NetworkView />
                </Pane>
            </Workspace>
            <Playbar>
                <Buttons $top={9}>
                    <PlayButton aria-label="first"><Icon name="first" size={19} /></PlayButton>
                    <PlayButton aria-label="reverse"><Icon name="reverse" size={16} /></PlayButton>
                    <PlayButton aria-label="stop" $on><Icon name="halt" size={17} /></PlayButton>
                    <PlayButton aria-label="play">
                        <Icon name="play" size={16} />
                        <Cursor width="14" height="18" viewBox="0 0 14 18"><path d="M1 1v13l3-2 3 5 3-1-3-5h5z" fill="#fff" stroke="#222" /></Cursor>
                    </PlayButton>
                    <PlayButton aria-label="last"><Icon name="last" size={19} /></PlayButton>
                    <FrameInput $w={40} aria-label="Frame" defaultValue="1" />
                    <PlayButton $small aria-label="step back"><Icon name="stepback" size={8} /></PlayButton>
                    <PlayButton $small aria-label="step forward"><Icon name="stepfwd" size={8} /></PlayButton>
                </Buttons>
                <Timeline />
                <Buttons>
                    <PlayButton aria-label="options"><Icon name="page" size={17} /></PlayButton>
                    <PlayButton aria-label="audio"><Icon name="sound" size={17} /></PlayButton>
                    <PlayButton aria-label="loop"><Icon name="loop" size={17} /></PlayButton>
                    <PlayButton aria-label="realtime"><Icon name="clock" size={17} /></PlayButton>
                    <PlayButton aria-label="range"><Icon name="comb" size={17} /></PlayButton>
                    <PlayButton aria-label="key"><Icon name="key" size={17} /></PlayButton>
                    <PlayButton $flat aria-label="previous key"><Icon name="keyprev" size={10} /></PlayButton>
                    <PlayButton $flat aria-label="next key"><Icon name="keynext" size={10} /></PlayButton>
                </Buttons>
                <RangeRow>
                    <FrameInput aria-label="Start" defaultValue="1" />
                    <FrameInput aria-label="End" defaultValue="1" />
                    <input type="range" aria-label="Playback range" min="1" max="360" defaultValue="1" />
                </RangeRow>
            </Playbar>
        </Shell>
    )
}
